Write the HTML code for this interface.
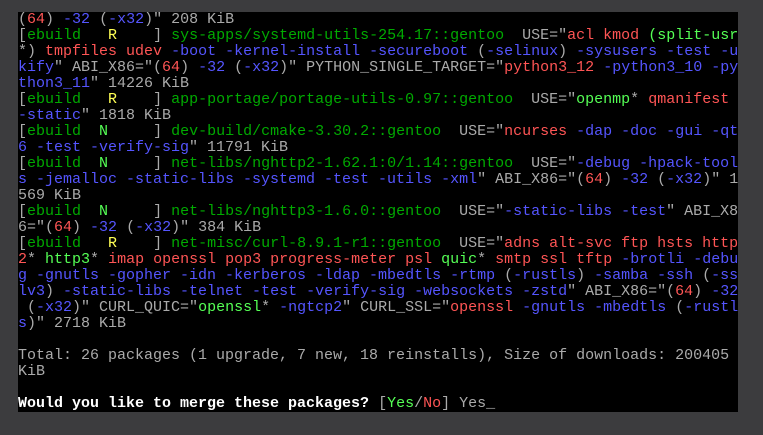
<!DOCTYPE html>
<html><head><style>
html,body{margin:0;padding:0;background:#3c3c3e;width:763px;height:435px;overflow:hidden}
#t{position:absolute;left:18px;top:12px;width:720px;height:400px;background:#000}
pre{margin:0;font-family:"Liberation Mono",monospace;font-size:15px;line-height:16px;color:#aaa;letter-spacing:0}
.g{color:#00aa00}.G{color:#55ff55}.r{color:#ff5555}.b{color:#5555ff}.y{color:#ffff55}.w{color:#fff;font-weight:bold}
</style></head><body><div id="t"><pre>(<span class="r">64</span>) <span class="b">-32</span> (<span class="b">-x32</span>)" 208 KiB
[<span class="g">ebuild</span>   <span class="y">R</span>    ] <span class="g">sys-apps/systemd-utils-254.17::gentoo</span>  USE="<span class="r">acl kmod</span> <span class="G">(split-usr</span>
*) <span class="r">tmpfiles udev</span> <span class="b">-boot -kernel-install -secureboot</span> (<span class="b">-selinux</span>) <span class="b">-sysusers -test -u</span>
<span class="b">kify</span>" ABI_X86="(<span class="r">64</span>) <span class="b">-32</span> (<span class="b">-x32</span>)" PYTHON_SINGLE_TARGET="<span class="r">python3_12</span> <span class="b">-python3_10 -py</span>
<span class="b">thon3_11</span>" 14226 KiB
[<span class="g">ebuild</span>   <span class="y">R</span>    ] <span class="g">app-portage/portage-utils-0.97::gentoo</span>  USE="<span class="G">openmp</span>* <span class="r">qmanifest</span>
<span class="b">-static</span>" 1818 KiB
[<span class="g">ebuild</span>  <span class="G">N</span>     ] <span class="g">dev-build/cmake-3.30.2::gentoo</span>  USE="<span class="r">ncurses</span> <span class="b">-dap -doc -gui -qt</span>
<span class="b">6 -test -verify-sig</span>" 11791 KiB
[<span class="g">ebuild</span>  <span class="G">N</span>     ] <span class="g">net-libs/nghttp2-1.62.1:0/1.14::gentoo</span>  USE="<span class="b">-debug -hpack-tool</span>
<span class="b">s -jemalloc -static-libs -systemd -test -utils -xml</span>" ABI_X86="(<span class="r">64</span>) <span class="b">-32</span> (<span class="b">-x32</span>)" 1
569 KiB
[<span class="g">ebuild</span>  <span class="G">N</span>     ] <span class="g">net-libs/nghttp3-1.6.0::gentoo</span>  USE="<span class="b">-static-libs -test</span>" ABI_X8
6="(<span class="r">64</span>) <span class="b">-32</span> (<span class="b">-x32</span>)" 384 KiB
[<span class="g">ebuild</span>   <span class="y">R</span>    ] <span class="g">net-misc/curl-8.9.1-r1::gentoo</span>  USE="<span class="r">adns alt-svc ftp hsts http</span>
<span class="r">2</span>* <span class="G">http3</span>* <span class="r">imap openssl pop3 progress-meter psl</span> <span class="G">quic</span>* <span class="r">smtp ssl tftp</span> <span class="b">-brotli -debu</span>
<span class="b">g -gnutls -gopher -idn -kerberos -ldap -mbedtls -rtmp</span> (<span class="b">-rustls</span>) <span class="b">-samba -ssh</span> (<span class="b">-ss</span>
<span class="b">lv3</span>) <span class="b">-static-libs -telnet -test -verify-sig -websockets -zstd</span>" ABI_X86="(<span class="r">64</span>) <span class="b">-32</span>
 (<span class="b">-x32</span>)" CURL_QUIC="<span class="G">openssl</span>* <span class="b">-ngtcp2</span>" CURL_SSL="<span class="r">openssl</span> <span class="b">-gnutls -mbedtls</span> (<span class="b">-rustl</span>
<span class="b">s</span>)" 2718 KiB

Total: 26 packages (1 upgrade, 7 new, 18 reinstalls), Size of downloads: 200405
KiB

<span class="w">Would you like to merge these packages?</span> [<span class="G">Yes</span>/<span class="r">No</span>] Yes_</pre></div></body></html>
